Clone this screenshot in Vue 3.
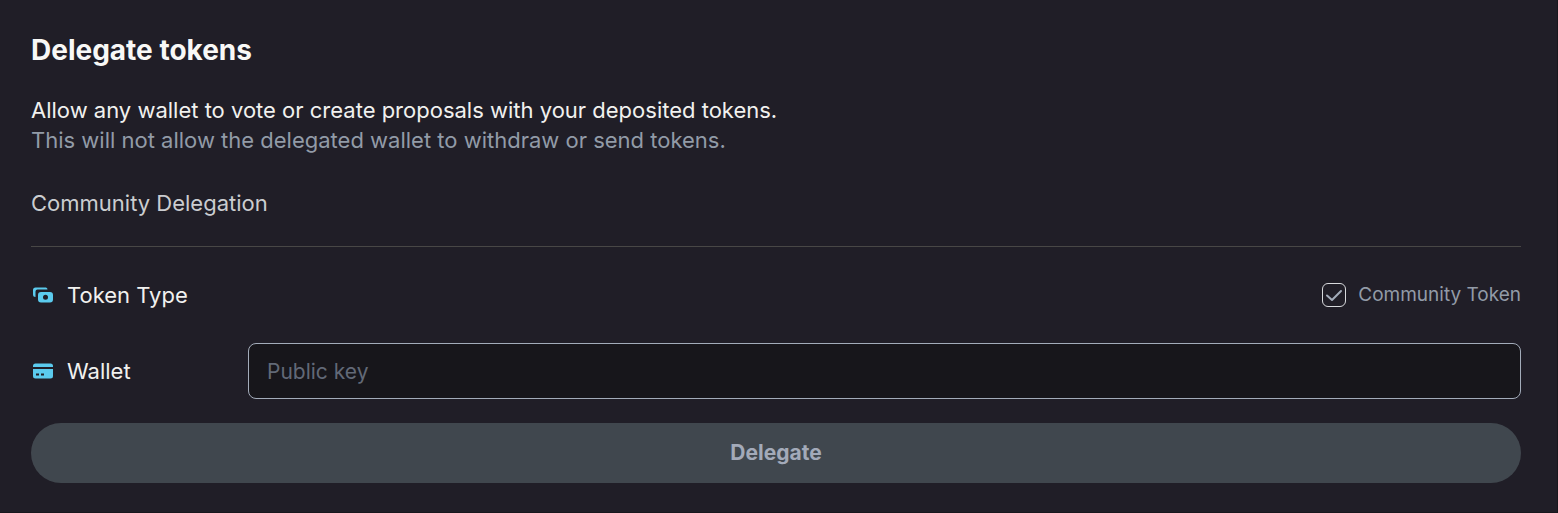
<script setup>
import { ref } from 'vue'

const communityToken = ref(true)
const publicKey = ref('')
</script>

<template>
  <main class="panel">
    <h1 class="title">Delegate tokens</h1>
    <p class="lead">Allow any wallet to vote or create proposals with your deposited tokens.</p>
    <p class="note">This will not allow the delegated wallet to withdraw or send tokens.</p>

    <h2 class="section">Community Delegation</h2>

    <form @submit.prevent>
      <div class="row token-row">
        <div class="label">
          <svg class="icon" viewBox="0 0 24 24" aria-hidden="true">
            <path
              d="M4.500 4.500H15A2 2 0 0 1 16.500 6.500H6.500A2 2 0 0 0 4.500 8.500V14A2.500 2.500 0 0 1 2 11.500V7A2.500 2.500 0 0 1 4.500 4.500Z"
            />
            <path
              fill-rule="evenodd"
              d="M10 9H19A3 3 0 0 1 22 12V16.500A3 3 0 0 1 19 19.500H10A3 3 0 0 1 7 16.500V12A3 3 0 0 1 10 9ZM14.500 11.800A2.500 2.500 0 1 0 14.500 16.800A2.500 2.500 0 1 0 14.500 11.800Z"
            />
          </svg>
          <span>Token Type</span>
        </div>
        <label class="choice">
          <input v-model="communityToken" class="box" type="checkbox" />
          <svg class="tick" viewBox="0 0 24 24" aria-hidden="true">
            <path v-if="communityToken" d="M5 12.500L10 17L19 8" />
          </svg>
          <span>Community Token</span>
        </label>
      </div>

      <div class="row wallet-row">
        <label class="label wallet-label" for="wallet">
          <svg class="icon" viewBox="0 0 24 24" aria-hidden="true">
            <path d="M2 8V7A2.500 2.500 0 0 1 4.500 4.500H19.500A2.500 2.500 0 0 1 22 7V8Z" />
            <path
              fill-rule="evenodd"
              d="M2 10H22V17A2.500 2.500 0 0 1 19.500 19.500H4.500A2.500 2.500 0 0 1 2 17ZM5 14.500V16.500H8V14.500ZM10 14.500V16.500H13V14.500Z"
            />
          </svg>
          <span>Wallet</span>
        </label>
        <input id="wallet" v-model="publicKey" class="field" type="text" placeholder="Public key" />
      </div>

      <button class="submit" type="submit" :disabled="!publicKey">Delegate</button>
    </form>
  </main>
</template>

<style>
body {
  margin: 0;
  background: #201e27;
}
</style>

<style scoped>
.panel {
  box-sizing: border-box;
  min-height: 100vh;
  padding: 32px 36px 28px 31px;
  border-right: 1px solid #18171d;
  border-bottom: 1px solid #18171d;
  background: #201e27;
  color: #f1f1ef;
  font-family: Inter, "Liberation Sans", sans-serif;
  font-size: 22px;
  line-height: 30px;
}

.title {
  margin: 0 0 27px;
  font-size: 28px;
  font-weight: 700;
  line-height: 36px;
  color: #f8f8f6;
}

.lead,
.note {
  margin: 0;
}

.note {
  color: #929ba7;
}

.section {
  margin: 33px 0 0;
  padding-bottom: 28px;
  border-bottom: 1px solid #484746;
  font-size: 22px;
  font-weight: 400;
  color: #cbcdd0;
}

.row {
  display: flex;
  align-items: center;
}

.token-row {
  justify-content: space-between;
  margin-top: 33px;
}

.label {
  display: flex;
  align-items: center;
  gap: 12px;
}

.icon {
  width: 24px;
  height: 24px;
  fill: #5bcbee;
}

.choice {
  position: relative;
  display: flex;
  align-items: center;
  gap: 12px;
  font-size: 19px;
  line-height: 24px;
  color: #929ba7;
}

.box {
  appearance: none;
  box-sizing: border-box;
  width: 24px;
  height: 24px;
  margin: 0;
  border: 1px solid #d8dadd;
  border-radius: 6px;
}

.tick {
  position: absolute;
  left: 0;
  width: 24px;
  height: 24px;
  fill: none;
  stroke: #a3acba;
  stroke-width: 2;
  stroke-linecap: round;
  stroke-linejoin: round;
  pointer-events: none;
}

.wallet-row {
  margin-top: 33px;
}

.wallet-label {
  width: 217px;
  flex: none;
}

.field {
  box-sizing: border-box;
  flex: 1;
  min-width: 0;
  height: 56px;
  padding: 0 18px;
  border: 1px solid #a3acba;
  border-radius: 8px;
  background: #17161b;
  color: #f1f1ef;
  font: inherit;
  font-size: 21px;
}

.field::placeholder {
  color: #626977;
  opacity: 1;
}

.submit {
  display: block;
  width: 100%;
  height: 60px;
  margin-top: 24px;
  border: 0;
  border-radius: 30px;
  background: #40474e;
  color: #a3aab9;
  font: inherit;
  font-size: 21px;
  font-weight: 700;
}
</style>
